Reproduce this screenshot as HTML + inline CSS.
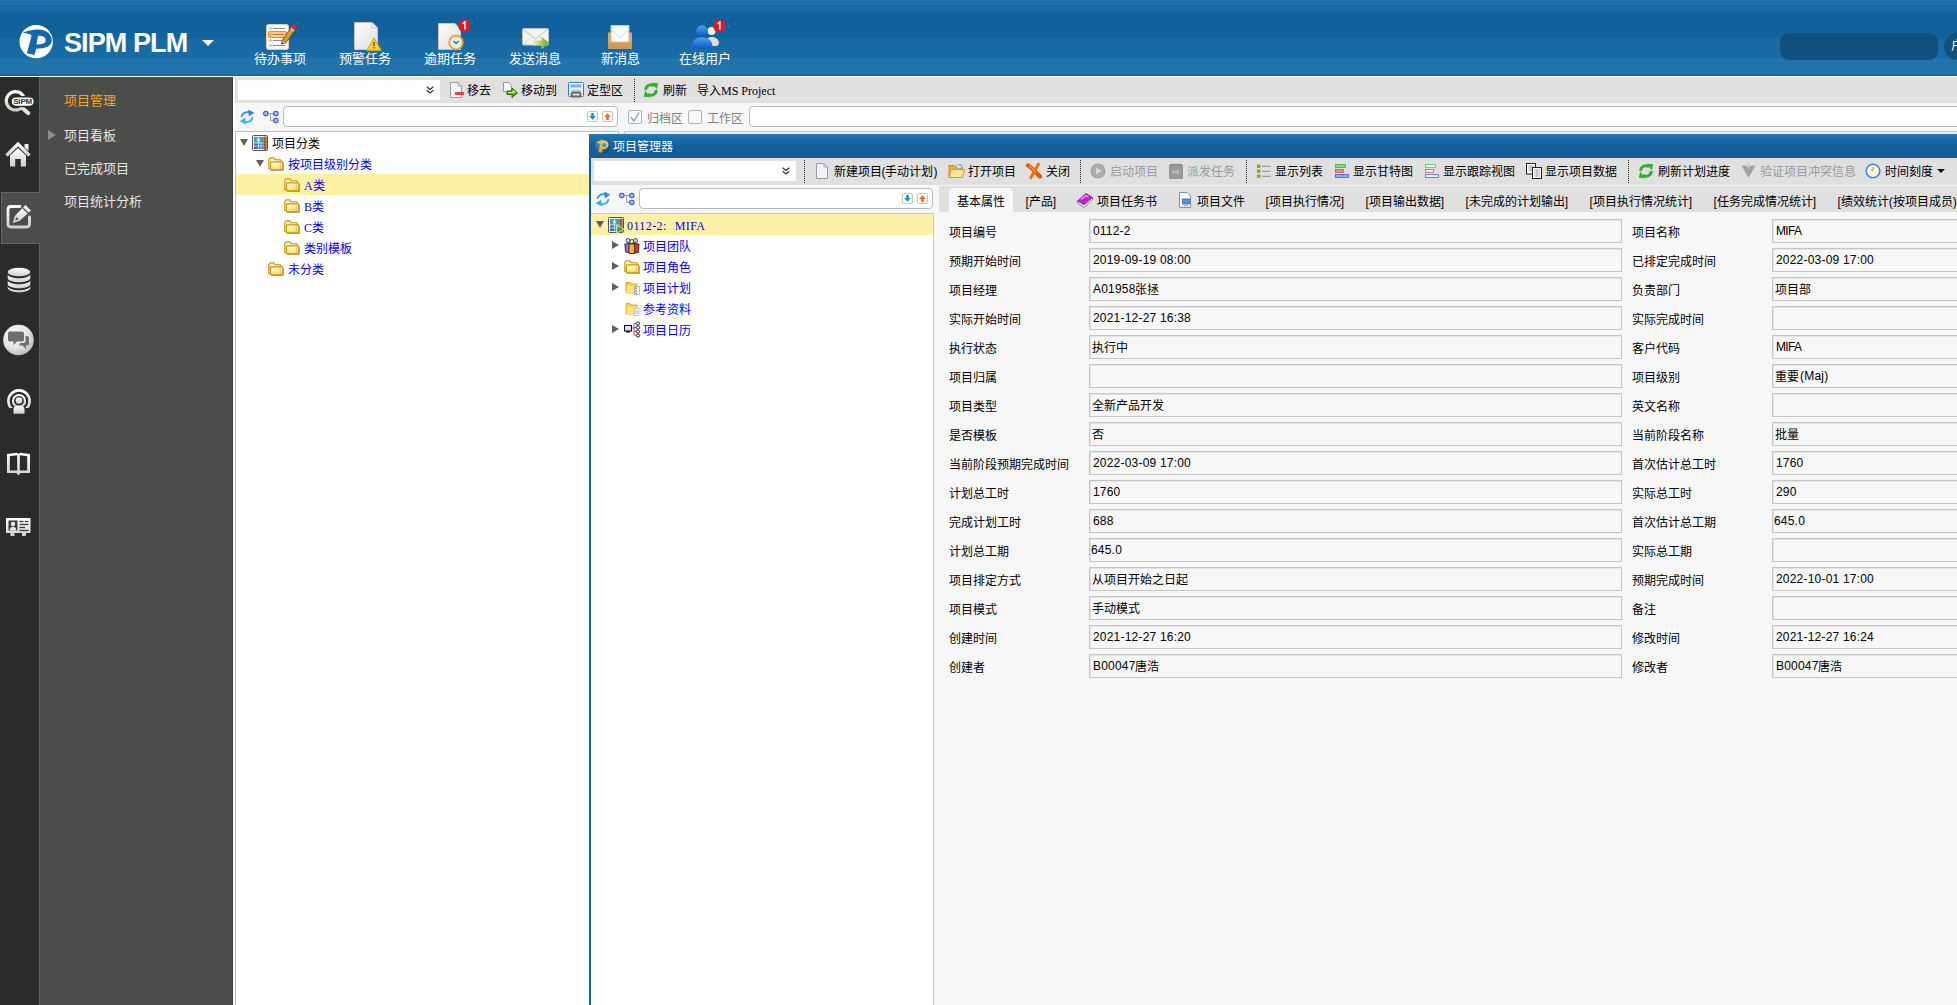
<!DOCTYPE html>
<html lang="zh-CN"><head><meta charset="utf-8">
<style>
*{box-sizing:border-box;margin:0;padding:0}
html,body{width:1957px;height:1005px;overflow:hidden;background:#fff;font-family:"Liberation Sans",sans-serif;font-size:12px;color:#000}
.abs{position:absolute}
#hdr{left:0;top:0;width:1957px;height:76px;background:linear-gradient(to bottom,#2371ab 0px,#2371ab 4px,#1c6ba7 5.5px,#196aa5 11px,#11609b 14px,#11619b 30px,#10639b 37.5px,#1a69a5 39.5px,#186ca4 57.5px,#2272ab 59.5px,#2274ac 74px,#10609a 75px,#10609a 76px)}
.tbtn{position:absolute;top:52px;width:80px;text-align:center;color:#fff;font-size:13px;line-height:13px;white-space:nowrap}
#dark{left:0;top:77px;width:39px;height:928px;background:#2a2c29}
#gray{left:39px;top:77px;width:194px;height:928px;background:#4b4d4a;border-left:1px solid #5f615e;border-right:1px solid #3a3c39}
.mi{position:absolute;left:64px;color:#e6e6e6;font-size:13px;line-height:14px;white-space:nowrap;letter-spacing:0px}
.tb{background:#e0e0e0}
.lt{background:#f7f7f7}
.t12{position:absolute;font-size:12px;line-height:12px;white-space:nowrap;margin-top:1px}
.ser{font-family:"Liberation Serif",serif}
.blue{color:#0000ff}
.gry{color:#9a9a9a}
.sbox{position:absolute;height:21px;border:1px solid #bababa;border-radius:4px;background:#fff}
.fld{position:absolute;height:24px;border:1px solid #c6c6c6;box-shadow:inset 1px 1px 0 #e4e4e4;background:#f7f7f7;font-size:12px;line-height:21px;padding-left:3px;padding-top:1px;letter-spacing:0.2px;white-space:nowrap;overflow:hidden}
.c{position:relative;top:1px;left:-1px;letter-spacing:0}
.lbl{position:absolute;font-size:12px;line-height:12px;white-space:nowrap;margin-top:1px}
.sep{position:absolute;width:0;border-left:1px dotted #222}
.arrD{position:absolute;width:0;height:0;border-left:4px solid transparent;border-right:4px solid transparent;border-top:7px solid #606060}
.arrR{position:absolute;width:0;height:0;border-top:4px solid transparent;border-bottom:4px solid transparent;border-left:7px solid #606060}
svg{position:absolute;overflow:visible}
</style></head><body>
<!-- HEADER -->
<div id="hdr" class="abs">
<!-- logo -->
<svg style="left:19px;top:24px" width="35" height="35" viewBox="0 0 35 35"><circle cx="17.2" cy="17.6" r="16.7" fill="#fff"/><path d="M 3.90 9.00 C 7.00 6.80 13.00 5.60 20.20 5.40 C 27.50 5.60 32.80 10.00 32.80 16.50 C 32.80 22.00 26.50 24.70 17.20 24.70 L 15.50 30.90 L 7.90 29.20 L 12.40 12.40 L 12.40 10.90 C 9.50 9.60 6.50 9.00 3.90 9.00 Z M 19.10 11.80 C 22.50 11.60 26.70 12.60 26.70 16.30 C 26.70 19.60 23.00 20.50 17.40 20.50 Z" fill="#1268b0" fill-rule="evenodd"/></svg>
<div class="abs" style="left:64px;top:27px;font-size:27px;line-height:32px;font-weight:bold;color:#fff;letter-spacing:-0.9px;white-space:nowrap">SIPM PLM</div>
<div class="abs" style="left:202px;top:40px;width:0;height:0;border-left:6px solid transparent;border-right:6px solid transparent;border-top:6px solid #fff"></div>
<svg style="left:0;top:0" width="800" height="76" viewBox="0 0 800 76">
<defs>
<linearGradient id="pg" x1="0" y1="0" x2="1" y2="1"><stop offset="0" stop-color="#fff"/><stop offset="1" stop-color="#dcdcdc"/></linearGradient>
<linearGradient id="bl" x1="0" y1="0" x2="0" y2="1"><stop offset="0" stop-color="#4aa3f0"/><stop offset="1" stop-color="#0a56c8"/></linearGradient>
<linearGradient id="gr" x1="0" y1="0" x2="1" y2="0"><stop offset="0" stop-color="#e8f0c8"/><stop offset="1" stop-color="#6aa810"/></linearGradient>
</defs>
<!-- todo -->
<rect x="266.5" y="24.5" width="22" height="25" rx="2" fill="#fbfaf6" stroke="#d8ccb4"/>
<g stroke="#8a8a8a" stroke-width="1"><line x1="273" y1="28.5" x2="285" y2="28.5"/><line x1="273" y1="40.5" x2="285" y2="40.5"/><line x1="273" y1="45.5" x2="285" y2="45.5"/></g>
<g fill="#ddd" stroke="#999" stroke-width="0.6"><circle cx="270.5" cy="28.5" r="1.1"/><circle cx="270.5" cy="40.5" r="1.1"/><circle cx="270.5" cy="45.5" r="1.1"/></g>
<rect x="268.5" y="31.5" width="18" height="6" rx="1.5" fill="#fbc98a" stroke="#f08a1c" stroke-width="1.2"/>
<line x1="273" y1="34.5" x2="284" y2="34.5" stroke="#c0762a"/><circle cx="270.7" cy="34.5" r="1" fill="#f7e2c0" stroke="#c0762a" stroke-width="0.6"/>
<path d="M293 25 L296.400 27.800 L286.200 42.400 L281.600 44 L282.800 39.400 Z" fill="#d8a032" stroke="#6a4a10" stroke-width="0.800"/>
<path d="M291.200 27.600 L294.600 30.400 L296.400 27.800 C296.800 26 294.500 24.200 293 25 Z" fill="#ee1c24"/>
<path d="M290.300 28.900 L293.700 31.700 L294.600 30.400 L291.200 27.600 Z" fill="#c8c8c8"/>
<path d="M282.800 39.400 L286.200 42.400 L281.600 44 Z" fill="#e8cc8a" stroke="#6a4a10" stroke-width="0.600"/>
<path d="M282.100 42.400 L283.200 43.400 L281.600 44 Z" fill="#3a2a1a"/>
<!-- warn -->
<path d="M354.5 22.5 L372 22.5 L377.5 28 L377.5 49.5 L354.5 49.5 Z" fill="url(#pg)" stroke="#c4c4c4"/>
<path d="M372 22.5 L372 28 L377.5 28 Z" fill="#f2f2f2" stroke="#c4c4c4" stroke-width="0.8"/>
<path d="M374 38.2 L381 50.3 L367 50.3 Z" fill="#f8d23a" stroke="#e0a818" stroke-width="1.2" stroke-linejoin="round"/>
<rect x="373.3" y="42" width="1.5" height="4" fill="#7a5a10"/><rect x="373.3" y="47" width="1.5" height="1.5" fill="#7a5a10"/>
<!-- overdue -->
<path d="M438.5 23.5 L455 23.5 L460.5 29 L460.5 49.5 L438.5 49.5 Z" fill="url(#pg)" stroke="#c4c4c4"/>
<circle cx="456" cy="42.5" r="6.8" fill="#e8ecf6" stroke="#f0a21e" stroke-width="1.8"/>
<path d="M453.5 41 L456 43.5 L458.8 41" fill="none" stroke="#555" stroke-width="1.1"/>
<circle cx="464.3" cy="25.8" r="6.2" fill="#e01a2a"/>
<path d="M462.6 23.6 L464.9 22 L464.9 29.5" fill="none" stroke="#fff" stroke-width="1.5"/>
<!-- send -->
<rect x="522.5" y="28.5" width="26" height="16.5" rx="1" fill="#f4f4f4" stroke="#bdbdbd"/>
<path d="M523 29 L535.5 39 L548 29" fill="none" stroke="#bdbdbd" stroke-width="1"/>
<path d="M523 45 L532 36.5 M548 45 L539 36.5" fill="none" stroke="#d2d2d2" stroke-width="0.8"/>
<path d="M533 40.5 L541.5 40.5 L541.5 36.8 L549.2 43 L541.5 49.2 L541.5 45.5 L533 45.5 Z" fill="url(#gr)"/>
<!-- inbox -->
<path d="M611 25.5 L629 25.5 L629 43 L611 43 Z" fill="#f6f6f8" stroke="#d0d0d4" stroke-width="0.8"/>
<path d="M611 30.5 L620 38.5 L629 30.5" fill="none" stroke="#cfcfd4" stroke-width="0.9"/>
<path d="M608 32.5 L611 32.5 L611 41.5 L629 41.5 L629 32.5 L632 32.5 L632 48.8 L608 48.8 Z" fill="#dfa865"/>
<path d="M608 43 L632 43 L632 48.8 L608 48.8 Z" fill="#d39a55"/>
<path d="M613 30 L627 30 L627 41.5 L613 41.5 Z" fill="#fdfdff" opacity="0.9"/>
<path d="M613 31 L620 37.5 L627 31" fill="none" stroke="#d4d4da" stroke-width="0.9"/>
<!-- users -->
<circle cx="711.5" cy="31" r="4" fill="#f2f2f2"/><path d="M705.5 46 C705.5 39 708 37 711.5 37 C716 37 719 39.5 719 44 L717 46 Z" fill="#dcdcdc"/>
<circle cx="702" cy="31" r="5.8" fill="url(#bl)"/>
<path d="M692.2 47 C692.2 40 696 37.2 702 37.2 C708.5 37.2 712.5 40.5 712.5 47 C709 49.6 695.5 49.6 692.2 47 Z" fill="url(#bl)"/>
<circle cx="719.2" cy="26" r="6.2" fill="#e01a2a"/>
<path d="M717.5 23.8 L719.8 22.2 L719.8 29.7" fill="none" stroke="#fff" stroke-width="1.5"/>
</svg>
<div class="tbtn" style="left:240px">待办事项</div>
<div class="tbtn" style="left:325px">预警任务</div>
<div class="tbtn" style="left:410px">逾期任务</div>
<div class="tbtn" style="left:495px">发送消息</div>
<div class="tbtn" style="left:580px">新消息</div>
<div class="tbtn" style="left:665px">在线用户</div>
<div class="abs" style="left:1780px;top:33px;width:158px;height:27px;border-radius:9px;background:#114f7c"></div>
<div class="abs" style="left:1944px;top:33px;width:27px;height:27px;border-radius:13.5px;background:#114f7c"></div>
<div class="abs" style="left:1951px;top:40px;color:#fff;font-size:12px;line-height:12px">户</div>
</div>
<!-- SIDEBAR -->
<div id="dark" class="abs"></div>
<div id="gray" class="abs"></div>
<div class="abs" style="left:1px;top:192px;width:39px;height:52px;background:#4b4d4a;border:1px solid #636562;border-right:none"></div>
<svg style="left:0;top:77px" width="40" height="480" viewBox="0 77 40 480">
<defs><linearGradient id="ic" x1="0" y1="0" x2="0" y2="1"><stop offset="0" stop-color="#ffffff"/><stop offset="1" stop-color="#cfcfcf"/></linearGradient>
<radialGradient id="cb" cx="0.4" cy="0.35" r="0.7"><stop offset="0" stop-color="#ffffff"/><stop offset="0.6" stop-color="#e4e4e4"/><stop offset="1" stop-color="#b4b4b4"/></radialGradient></defs>
<!-- search SIPM -->
<circle cx="15.500" cy="100.800" r="9.200" fill="none" stroke="url(#ic)" stroke-width="3.200"/>
<line x1="23" y1="108.500" x2="28.300" y2="113.200" stroke="#e2e2e2" stroke-width="4" stroke-linecap="round"/>
<rect x="11" y="96.800" width="23.400" height="9.600" rx="4.800" fill="#fff" stroke="#2a2c29" stroke-width="1.500"/>
<text x="22.700" y="103.800" font-family="Liberation Sans,sans-serif" font-weight="bold" font-size="8" text-anchor="middle" fill="#333" textLength="19">SIPM</text>
<!-- home -->
<path d="M6.5 155.5 L18 144 L29.5 155.5" fill="none" stroke="url(#ic)" stroke-width="3.2" stroke-linejoin="miter"/>
<path d="M24.5 144 L28.5 144 L28.5 151 L24.5 147.5 Z" fill="#ededed"/>
<path d="M10 155.5 L18 148 L26 155.5 L26 166.5 L20.8 166.5 L20.8 159 L15.2 159 L15.2 166.5 L10 166.5 Z" fill="url(#ic)"/>
<!-- edit -->
<path d="M20 206.5 L11 206.5 C9 206.5 8 207.5 8 209.5 L8 224 C8 226 9 227 11 227 L26.5 227 C28.5 227 29.5 226 29.5 224 L29.5 217" fill="none" stroke="url(#ic)" stroke-width="2.8" stroke-linecap="round"/>
<path d="M25.5 205 L31 210.5 L19.5 221 L12.8 223 L14.8 216 Z" fill="url(#ic)"/>
<path d="M16.5 217 L18.8 219.3 L15 220.6 Z" fill="#4b4d4a"/>
<line x1="23" y1="208" x2="28.5" y2="213.5" stroke="#4b4d4a" stroke-width="1.3"/>
<!-- db -->
<g fill="url(#ic)"><ellipse cx="19" cy="272" rx="11.3" ry="4.3"/>
<path d="M7.7 274.5 C10 279.5 28 279.5 30.3 274.5 L30.3 278.5 C28 283.5 10 283.5 7.7 278.5 Z"/>
<path d="M7.7 280.5 C10 285.5 28 285.5 30.3 280.5 L30.3 284.5 C28 289.5 10 289.5 7.7 284.5 Z"/>
<path d="M7.7 286.5 C10 291.5 28 291.5 30.3 286.5 L30.3 288.3 C28 293.8 10 293.8 7.7 288.3 Z"/></g>
<!-- chat -->
<circle cx="18.5" cy="340" r="15.3" fill="url(#cb)"/>
<path d="M10 331.5 L22 331.5 C23.2 331.5 24 332.3 24 333.5 L24 339.5 C24 340.7 23.2 341.5 22 341.5 L17 341.5 L13.5 345 L13.5 341.5 L10 341.5 C8.8 341.5 8 340.7 8 339.5 L8 333.5 C8 332.3 8.800 331.5 10 331.5 Z" fill="#6e6e6e"/>
<path d="M25.5 336 L27 336 C28.200 336 29 336.800 29 338 L29 343.500 C29 344.700 28.200 345.500 27 345.500 L26 345.500 L26 349 L22.500 345.500 L19 345.500 L20 343 L23.500 343 C24.700 343 25.500 342.200 25.500 341 Z" fill="#6e6e6e"/>
<!-- broadcast -->
<circle cx="19" cy="401" r="10.600" fill="none" stroke="url(#ic)" stroke-width="2.600"/>
<circle cx="19" cy="401" r="6" fill="none" stroke="url(#ic)" stroke-width="2.200"/>
<rect x="6" y="408" width="26" height="8" fill="#2a2c29"/>
<circle cx="19" cy="400.500" r="3.300" fill="url(#ic)"/>
<path d="M13.500 413.800 L13.500 409.500 C13.500 406.500 16 405.500 19 405.500 C22 405.500 24.500 406.500 24.500 409.500 L24.500 413.800 Z" fill="url(#ic)"/>
<!-- book -->
<path d="M7 454 L17 452.800 L18.500 454 L20 452.800 L30 454 L30 473 L20.500 473 L18.500 475.500 L16.500 473 L7 473 Z M9.800 456.200 L9.800 470.400 L17.200 470.400 L17.200 455.300 Z M27.200 456.200 L27.200 470.400 L19.800 470.400 L19.800 455.300 Z" fill="url(#ic)" fill-rule="evenodd"/>
<!-- card -->
<path d="M6 518 L30.500 518 L30.500 533 L26 533 L26 536 L22 536 L22 533 L14.500 533 L14.500 536 L10.500 536 L10.500 533 L6 533 Z" fill="url(#ic)"/>
<rect x="8.500" y="520.500" width="9" height="10" fill="#3a3c39"/>
<circle cx="13" cy="524" r="2.200" fill="#e8e8e8"/><path d="M9.800 530.500 C9.800 527.500 11.500 526.800 13 526.800 C14.500 526.800 16.200 527.500 16.200 530.500 Z" fill="#e8e8e8"/>
<g stroke="#3a3c39" stroke-width="1.300"><line x1="19.500" y1="521.500" x2="23.500" y2="521.500"/><line x1="24.800" y1="521.500" x2="28.500" y2="521.500"/><line x1="19.500" y1="524.500" x2="28.500" y2="524.500"/><line x1="19.500" y1="527.500" x2="25" y2="527.500"/><line x1="19.500" y1="530.500" x2="28.500" y2="530.500"/></g>
</svg>
<div class="mi" style="top:94px;color:#f9a61a">项目管理</div>
<div class="abs" style="left:48px;top:130px;width:0;height:0;border-top:5px solid transparent;border-bottom:5px solid transparent;border-left:8px solid #8d8f8c"></div>
<div class="mi" style="top:129px">项目看板</div>
<div class="mi" style="top:162px">已完成项目</div>
<div class="mi" style="top:195px">项目统计分析</div>
<!-- MAIN -->
<svg width="0" height="0" style="left:0;top:0"><defs>
<linearGradient id="fg" x1="0" y1="0" x2="0" y2="1"><stop offset="0" stop-color="#fffde4"/><stop offset="0.5" stop-color="#fff0a0"/><stop offset="1" stop-color="#fbd65a"/></linearGradient>
<linearGradient id="rb" x1="0" y1="0" x2="1" y2="1"><stop offset="0" stop-color="#1e78e6"/><stop offset="1" stop-color="#46c8f0"/></linearGradient>
<symbol id="i-rfb" viewBox="0 0 16 16"><path d="M2.600 7.400 C3.400 4 7 2.400 10.400 3.400" fill="none" stroke="url(#rb)" stroke-width="1.900" stroke-linecap="round"/><path d="M9.200 0.400 L15.200 3.800 L9.800 7.400 Z" fill="#2a86ec"/><path d="M13.400 8.800 C12.600 12.200 9 13.800 5.600 12.800" fill="none" stroke="url(#rb)" stroke-width="1.900" stroke-linecap="round"/><path d="M6.800 15.600 L0.800 12.200 L6.200 8.600 Z" fill="#38b0ee"/></symbol>
<symbol id="i-rfg" viewBox="0 0 16 16"><path d="M2.600 7.800 A5.400 5.400 0 0 1 11.200 3.800" stroke="#2db22a" stroke-width="3" fill="none"/><path d="M8.800 0.800 L15.200 1.200 L13.800 7.600 Z" fill="#2db22a"/><path d="M13.400 8.200 A5.400 5.400 0 0 1 4.800 12.200" stroke="#2db22a" stroke-width="3" fill="none"/><path d="M7.200 15.200 L0.800 14.800 L2.200 8.400 Z" fill="#2db22a"/></symbol>
<symbol id="i-tree" viewBox="0 0 16 14"><path d="M3 3.500 L12.500 3.500 M7.500 3.500 L7.500 10.500 L12.500 10.500" fill="none" stroke="#a2a2a2" stroke-width="1"/><g fill="#b0bef8" stroke="#3454e0" stroke-width="1.100"><circle cx="2.800" cy="3.500" r="2.200"/><circle cx="12.800" cy="3.500" r="2.200"/><circle cx="12.800" cy="10.500" r="2.200"/></g></symbol>
<symbol id="i-fold" viewBox="0 0 16 14"><path d="M15.300 6 L15.300 13.400 L3 13.400" fill="none" stroke="#6a5010" stroke-width="0.900" opacity="0.650"/><path d="M0.800 11.800 L0.800 2.600 L2.200 0.900 L5.800 0.900 L7.300 2.800 L12.600 2.800 L13.200 3.600 L13.200 11.800 Z" fill="#fff6c8" stroke="#c8940c" stroke-width="1.100" stroke-linejoin="round"/><rect x="2.400" y="4.900" width="12.300" height="7.900" rx="0.800" fill="url(#fg)" stroke="#c8940c" stroke-width="1.100"/><path d="M12.300 5.600 L12.300 12.200" stroke="#f2aa50" stroke-width="0.800"/></symbol>
<symbol id="i-dn" viewBox="0 0 11 11"><rect x="0.500" y="0.500" width="10" height="10" rx="1.500" fill="#fff" stroke="#c4c4c4"/><path d="M4.200 2 L6.800 2 L6.800 5 L8.800 5 L5.500 8.800 L2.200 5 L4.200 5 Z" fill="#1890d8"/></symbol>
<symbol id="i-up" viewBox="0 0 11 11"><rect x="0.500" y="0.500" width="10" height="10" rx="1.500" fill="#fff" stroke="#c4c4c4"/><path d="M4.200 9 L6.800 9 L6.800 6 L8.800 6 L5.500 2.200 L2.200 6 L4.200 6 Z" fill="#ff6a00"/></symbol>
<symbol id="i-chev" viewBox="0 0 8 8"><path d="M0.700 0.700 L4 3.500 L7.300 0.700 M0.700 4.200 L4 7 L7.300 4.200" fill="none" stroke="#333" stroke-width="1.200"/></symbol>
<symbol id="i-grid" viewBox="0 0 16 16"><rect x="0.500" y="0.500" width="15" height="15" rx="1" fill="#f4f4f4" stroke="#555"/><rect x="2" y="2" width="9.500" height="12" fill="#3e68b8"/><rect x="2" y="2" width="9.500" height="6" fill="#3fa0ae"/><path d="M2 8 L11.500 8 M6.500 2 L6.500 14 M2 11 L11.500 11 M9 8 L9 14" stroke="#e8f4ff" stroke-width="0.800"/><circle cx="6.500" cy="5" r="1.400" fill="none" stroke="#e8f8ff" stroke-width="0.800"/><rect x="11.800" y="1.500" width="3" height="13.500" fill="#b8703a"/><path d="M11.800 4 L13.500 4 M11.800 7 L13.500 7 M11.800 10 L13.500 10 M11.800 13 L13.500 13" stroke="#5a2c10" stroke-width="0.800"/></symbol>
<symbol id="i-doc" viewBox="0 0 14 16"><path d="M1.500 0.500 L9 0.500 L12.500 4 L12.500 15.500 L1.500 15.500 Z" fill="#f2f2fa" stroke="#9c9ca4"/><path d="M9 0.500 L9 4 L12.500 4" fill="none" stroke="#9a9a9a" stroke-width="0.800"/></symbol>
</defs></svg>
<div id="main">
<div class="abs tb" style="left:235px;top:77px;width:1722px;height:26px"></div>
<div class="abs lt" style="left:235px;top:103px;width:1722px;height:29px"></div>
<div class="abs" style="left:238px;top:80px;width:202px;height:20px;background:#fffcfd"></div>
<svg style="left:426px;top:86px" width="8" height="8"><use href="#i-chev"/></svg>
<!-- toolbar buttons -->
<svg style="left:449px;top:82px" width="14" height="16"><use href="#i-doc"/></svg>
<div class="abs" style="left:455px;top:92px;width:9px;height:3px;background:#e0444c"></div>
<div class="t12" style="left:467px;top:84px">移去</div>
<svg style="left:502px;top:82px" width="16" height="16" viewBox="0 0 16 16"><path d="M1.500 0.500 L6.500 0.500 L9.500 3.500 L9.500 9.500 L1.500 9.500 Z" fill="#fdfdff" stroke="#8a8a9a" stroke-width="0.900"/><path d="M5 9 L10 9 L10 6 L15.500 10.800 L10 15.500 L10 12.500 L5 12.500 Z" fill="#2ca814" stroke="#0c6a08" stroke-width="0.900"/><path d="M6 10.600 L11.200 10.600 L11.200 8.800 L13.600 10.800" fill="none" stroke="#f4f43a" stroke-width="1.300"/></svg>
<div class="t12" style="left:521px;top:84px">移动到</div>
<svg style="left:568px;top:82px" width="16" height="16" viewBox="0 0 16 16"><rect x="0.500" y="0.500" width="15" height="14" rx="1" fill="#f4f8ff" stroke="#2a7cd0"/><rect x="2.500" y="2.500" width="11" height="3" fill="#6ab0ec"/><rect x="2.500" y="7.500" width="11" height="2" fill="#a8d0f4"/><rect x="3" y="10" width="10" height="5" rx="1.500" fill="#8a8a8a" stroke="#444" stroke-width="0.800"/><rect x="5" y="12" width="6" height="1.200" fill="#eee"/></svg>
<div class="t12" style="left:587px;top:84px">定型区</div>
<div class="sep" style="left:634px;top:79px;height:23px"></div>
<svg style="left:643px;top:82px" width="16" height="16"><use href="#i-rfg"/></svg>
<div class="t12" style="left:663px;top:84px">刷新</div>
<div class="t12" style="left:697px;top:84px">导入<span class="ser" style="font-size:12px">MS Project</span></div>
<!-- second row -->
<svg style="left:239px;top:109px" width="16" height="16"><use href="#i-rfb"/></svg>
<svg style="left:263px;top:110px" width="16" height="14"><use href="#i-tree"/></svg>
<div class="sbox" style="left:283px;top:106px;width:335px"></div>
<svg style="left:587px;top:111px" width="11" height="11"><use href="#i-dn"/></svg>
<svg style="left:602px;top:111px" width="11" height="11"><use href="#i-up"/></svg>
<div class="abs" style="left:628px;top:110px;width:14px;height:14px;border:1px solid #aab4c6;border-radius:2px;background:#f9f9f9"></div>
<svg style="left:630px;top:112px" width="10" height="10" viewBox="0 0 10 10"><path d="M1 5 L3.800 9 L9.200 0.500" fill="none" stroke="#8e98aa" stroke-width="1.300"/></svg>
<div class="t12" style="left:647px;top:112px;color:#808080">归档区</div>
<div class="abs" style="left:688px;top:110px;width:14px;height:14px;border:1px solid #aab4c6;border-radius:2px;background:#f9f9f9"></div>
<div class="t12" style="left:707px;top:112px;color:#808080">工作区</div>
<div class="sbox" style="left:749px;top:106px;width:1230px"></div>
<!-- left tree -->
<div class="abs" style="left:235px;top:131px;width:384px;height:880px;background:#fff;border:1px solid #bdbdbd"></div>
<div class="abs" style="left:236px;top:174px;width:382px;height:21px;background:#fef0a5"></div>
<div class="arrD" style="left:240px;top:139px"></div>
<svg style="left:252px;top:135px" width="16" height="16"><use href="#i-grid"/></svg>
<div class="t12" style="left:272px;top:137px">项目分类</div>
<div class="arrD" style="left:256px;top:160px"></div>
<svg style="left:268px;top:157px" width="16" height="14"><use href="#i-fold"/></svg>
<div class="t12 blue" style="left:288px;top:158px">按项目级别分类</div>
<svg style="left:284px;top:178px" width="16" height="14"><use href="#i-fold"/></svg>
<div class="t12 blue" style="left:304px;top:179px"><span class="ser">A</span>类</div>
<svg style="left:284px;top:199px" width="16" height="14"><use href="#i-fold"/></svg>
<div class="t12 blue" style="left:304px;top:200px"><span class="ser">B</span>类</div>
<svg style="left:284px;top:220px" width="16" height="14"><use href="#i-fold"/></svg>
<div class="t12 blue" style="left:304px;top:221px"><span class="ser">C</span>类</div>
<svg style="left:284px;top:241px" width="16" height="14"><use href="#i-fold"/></svg>
<div class="t12 blue" style="left:304px;top:242px">类别模板</div>
<svg style="left:268px;top:262px" width="16" height="14"><use href="#i-fold"/></svg>
<div class="t12 blue" style="left:288px;top:263px">未分类</div>
<!-- right grid stub -->
<div class="abs" style="left:624px;top:131px;width:1340px;height:4px;background:#f1eeee;border-top:1px solid #c6c6c6;border-left:1px solid #c6c6c6"></div>
</div>
<!-- POPUP -->
<div id="popup">
<div class="abs" style="left:589px;top:134px;width:1368px;height:871px;background:#f7f7f7;border-left:2px solid #11609b"></div>
<div class="abs" style="left:589px;top:134px;width:1368px;height:24px;background:linear-gradient(to bottom,#2a78b2 0,#1d6ba6 5px,#11609b 12px,#11609b 24px)"></div>
<svg style="left:594px;top:138px" width="16" height="16" viewBox="0 0 16 16"><defs><linearGradient id="po" x1="0" y1="1" x2="1" y2="0"><stop offset="0" stop-color="#f08a1a"/><stop offset="1" stop-color="#ffe04a"/></linearGradient><radialGradient id="pl" cx="0.4" cy="0.35" r="0.75"><stop offset="0" stop-color="#3aa0e0"/><stop offset="1" stop-color="#0a3a78"/></radialGradient></defs><circle cx="8" cy="8" r="7.800" fill="url(#pl)"/><path d="M2.200 5 C5 2.200 9 1.800 11.500 2.800 C14.500 4 15.200 7 13.800 9 C12.600 10.800 10.500 11.300 8.600 11.200 L7.700 14.800 L4.200 14.200 L6.300 6 C5 5 3.500 4.800 2.200 5 Z" fill="url(#po)"/><ellipse cx="10.300" cy="6.900" rx="2.300" ry="2" fill="#2aa4e0"/></svg>
<div class="t12" style="left:613px;top:140px;color:#fff">项目管理器</div>
<!-- popup toolbar -->
<div class="abs tb" style="left:591px;top:158px;width:1366px;height:27px"></div>
<div class="abs" style="left:594px;top:161px;width:202px;height:20px;background:#fffcfd"></div>
<svg style="left:782px;top:167px" width="8" height="8"><use href="#i-chev"/></svg>
<div class="sep" style="left:804px;top:160px;height:23px"></div>
<svg style="left:815px;top:163px" width="14" height="16"><use href="#i-doc"/></svg>
<div class="t12" style="left:833.5px;top:165px">新建项目(手动计划)</div>
<svg style="left:948px;top:163px" width="17" height="16" viewBox="0 0 17 16"><path d="M1 2.500 L6.500 2.500 L8 4 L14.500 4 L14.500 14.500 L1 14.500 Z" fill="#e4b04e" stroke="#c08a2a" stroke-width="0.900"/><path d="M9 1.500 L13.500 1.500 L13.500 5 L9 5 Z" fill="#f2f8ff" stroke="#7ab0e0" stroke-width="0.700"/><path d="M11 2.500 L13 2.500" stroke="#3aa0e8" stroke-width="1"/><path d="M3.200 6.500 L16.500 6.500 L14.500 14.500 L1 14.500 Z" fill="#fbe29a" stroke="#c8962e" stroke-width="0.900"/></svg>
<div class="t12" style="left:968px;top:165px">打开项目</div>
<svg style="left:1026px;top:163px" width="16" height="16" viewBox="0 0 16 16"><path d="M2 2.500 C6 5 10 9 14 13.500" fill="none" stroke="#ee5208" stroke-width="4.200" stroke-linecap="round"/><path d="M12.500 1.200 C10 5 7.500 10 4.800 14.800" fill="none" stroke="#f4680c" stroke-width="3" stroke-linecap="round"/><path d="M3 3 C6 5 8 7 10 9.500" fill="none" stroke="#fa9a4a" stroke-width="1.200" stroke-linecap="round"/></svg>
<div class="t12" style="left:1045.5px;top:165px">关闭</div>
<div class="sep" style="left:1080px;top:160px;height:23px"></div>
<svg style="left:1090px;top:163px" width="16" height="16" viewBox="0 0 16 16"><circle cx="8" cy="8" r="7.500" fill="#a4a4a4"/><circle cx="8" cy="8" r="6" fill="#aeaeae"/><path d="M6 4.500 L11.800 8 L6 11.500 Z" fill="#d8d8d8"/></svg>
<div class="t12 gry" style="left:1110px;top:165px">启动项目</div>
<svg style="left:1168px;top:163px" width="16" height="16" viewBox="0 0 16 16"><path d="M1.500 2 L14.500 2 L14.500 15.500 L1.500 15.500 Z" fill="#9a9a9a" stroke="#8a8a8a" stroke-width="0.800"/><path d="M2 2 L3 0.800 L4 2 L5 0.800 L6 2 L7 0.800 L8 2 L9 0.800 L10 2 L11 0.800 L12 2 L13 0.800 L14 2" fill="none" stroke="#8a8a8a" stroke-width="0.900"/><path d="M3.500 7 L8.500 7 L8.500 4.800 L12.800 9 L8.500 13.200 L8.500 11 L3.500 11 Z" fill="#b8b8b8" stroke="#888" stroke-width="0.600"/></svg>
<div class="t12 gry" style="left:1187px;top:165px">派发任务</div>
<div class="sep" style="left:1246px;top:160px;height:23px"></div>
<svg style="left:1257px;top:164px" width="14" height="14" viewBox="0 0 14 14"><g fill="#8ab82a" stroke="#5a8a10" stroke-width="0.600"><rect x="0.500" y="1" width="2.500" height="2.500"/><rect x="0.500" y="6" width="2.500" height="2.500"/><rect x="0.500" y="11" width="2.500" height="2.500"/></g><g stroke="#8a8a8a" stroke-width="1"><line x1="5" y1="2.300" x2="13.500" y2="2.300"/><line x1="5" y1="7.300" x2="13.500" y2="7.300"/><line x1="5" y1="12.300" x2="13.500" y2="12.300"/></g></svg>
<div class="t12" style="left:1275px;top:165px">显示列表</div>
<svg style="left:1335px;top:164px" width="14" height="14" viewBox="0 0 14 14"><rect x="0.500" y="0.500" width="10" height="3" fill="#7ee07e" stroke="#3cb03c" stroke-width="0.800"/><rect x="0.500" y="5.500" width="8" height="3" fill="#f08a7e" stroke="#d8503c" stroke-width="0.800"/><rect x="0.500" y="10.500" width="13" height="3" fill="#8aa8f4" stroke="#3c5ce0" stroke-width="0.800"/></svg>
<div class="t12" style="left:1353px;top:165px">显示甘特图</div>
<svg style="left:1425px;top:164px" width="14" height="14" viewBox="0 0 14 14"><rect x="0.500" y="0.500" width="10" height="3" fill="#f4fff4" stroke="#5cc05c" stroke-width="0.800"/><rect x="0.500" y="5.500" width="8" height="3" fill="#fff0f0" stroke="#e0604c" stroke-width="0.800"/><rect x="0.500" y="10.500" width="13" height="3" fill="#f0f4ff" stroke="#4c6ce0" stroke-width="0.800"/></svg>
<div class="t12" style="left:1443px;top:165px">显示跟踪视图</div>
<svg style="left:1526px;top:163px" width="16" height="16" viewBox="0 0 16 16"><rect x="0.500" y="0.500" width="9" height="10.500" fill="#fff" stroke="#222"/><path d="M2 3 L8 3 M2 5 L8 5 M2 7 L8 7 M5 2 L5 9" stroke="#999" stroke-width="0.700"/><rect x="6.500" y="4.500" width="9" height="11" fill="#fff" stroke="#222"/><path d="M8 7 L14 7 M8 9 L14 9 M8 11 L14 11 M8 13 L14 13 M11 6 L11 14" stroke="#999" stroke-width="0.700"/></svg>
<div class="t12" style="left:1545px;top:165px">显示项目数据</div>
<div class="sep" style="left:1628px;top:160px;height:23px"></div>
<svg style="left:1638px;top:163px" width="16" height="16"><use href="#i-rfg"/></svg>
<div class="t12" style="left:1657.5px;top:165px">刷新计划进度</div>
<svg style="left:1741px;top:163px" width="15" height="16" viewBox="0 0 15 16"><path d="M0.500 2.500 L5 2.500 L7.500 6 L10 2.500 L14.500 2.500 L7.500 15 Z" fill="#a2a2a2"/><path d="M7.500 0.500 L7.500 5 M5.500 3 L7.500 5.500 L9.500 3" stroke="#b8b8b8" stroke-width="1" fill="none"/></svg>
<div class="t12 gry" style="left:1759.5px;top:165px">验证项目冲突信息</div>
<svg style="left:1865px;top:163px" width="16" height="16" viewBox="0 0 16 16"><circle cx="8" cy="8" r="6.800" fill="#fdf6e0" stroke="#3a8ad8" stroke-width="1.600"/><path d="M8 4 L8 8 L5.500 6.500" fill="none" stroke="#c8982a" stroke-width="1"/></svg>
<div class="t12" style="left:1884.5px;top:165px">时间刻度</div>
<div class="abs" style="left:1937px;top:169px;width:0;height:0;border-left:4px solid transparent;border-right:4px solid transparent;border-top:4px solid #111"></div>
<!-- popup left tree -->
<svg style="left:595px;top:191px" width="16" height="16"><use href="#i-rfb"/></svg>
<svg style="left:619px;top:192px" width="16" height="14"><use href="#i-tree"/></svg>
<div class="sbox" style="left:639px;top:188px;width:294px"></div>
<svg style="left:902px;top:193px" width="11" height="11"><use href="#i-dn"/></svg>
<svg style="left:917px;top:193px" width="11" height="11"><use href="#i-up"/></svg>
<div class="abs" style="left:591px;top:213px;width:343px;height:800px;background:#fff;border-top:1px solid #c8c8c8;border-right:1px solid #c8c8c8"></div>
<div class="abs" style="left:591px;top:214px;width:342px;height:21px;background:#fef0a5"></div>
<div class="arrD" style="left:595.5px;top:221px"></div>
<svg style="left:608px;top:217px" width="16" height="16"><use href="#i-grid"/></svg>
<svg style="left:616px;top:225px" width="8.500" height="8.500" viewBox="0 0 10 10"><path d="M1 0.500 L9.500 5 L1 9.500 Z" fill="#2aa82a" stroke="#fff" stroke-width="0.800"/></svg>
<div class="t12 blue ser" style="left:627px;top:219px;font-size:12px;line-height:13px"><span style="letter-spacing:0.4px">0112-2<span style="letter-spacing:5px">:</span> MIFA</span></div>
<div class="arrR" style="left:612px;top:241px"></div>
<svg style="left:624px;top:237px" width="16" height="17" viewBox="0 0 16 17"><circle cx="4" cy="3.500" r="2" fill="#ddd" stroke="#222" stroke-width="0.800"/><circle cx="11.500" cy="3.500" r="2" fill="#ddd" stroke="#222" stroke-width="0.800"/><path d="M0.800 7 L6.500 6 L6.500 16 L1.500 15 Z" fill="#8a6ad8" stroke="#222" stroke-width="0.800"/><path d="M8.500 6 L15 7 L14.500 15.500 L8.500 16.500 Z" fill="#e02a1a" stroke="#222" stroke-width="0.800"/><path d="M5 7 L10.500 7 L10.500 16.500 L5 16.500 Z" fill="#f4b41a" stroke="#222" stroke-width="0.800"/><circle cx="7.800" cy="4.500" r="2" fill="#eee" stroke="#222" stroke-width="0.800"/></svg>
<div class="t12 blue" style="left:643px;top:240px">项目团队</div>
<div class="arrR" style="left:612px;top:262px"></div>
<svg style="left:624px;top:260px" width="16" height="14"><use href="#i-fold"/></svg>
<div class="t12 blue" style="left:643px;top:261px">项目角色</div>
<div class="arrR" style="left:612px;top:283px"></div>
<svg style="left:625px;top:281px" width="16" height="14" viewBox="0 0 16 14"><path d="M1 1.500 L5.500 1.500 L7 3 L12 3 L12 12 L1 12 Z" fill="#f6cc3c" stroke="#d4a020" stroke-width="0.800"/><path d="M2 4.500 L12.500 4.500 L12.500 12 L1.500 12 Z" fill="#fce47a"/><rect x="9.500" y="5.500" width="5" height="8" fill="#fff" stroke="#999" stroke-width="0.700"/><rect x="10.300" y="6.500" width="1.500" height="1.500" fill="#e02a2a"/><rect x="10.300" y="9" width="1.500" height="1.500" fill="#2aa82a"/><rect x="10.300" y="11.500" width="1.500" height="1.200" fill="#2a5ae0"/></svg>
<div class="t12 blue" style="left:643px;top:282px">项目计划</div>
<svg style="left:625px;top:302px" width="16" height="14" viewBox="0 0 16 14"><path d="M1 1.500 L5.500 1.500 L7 3 L12 3 L12 12 L1 12 Z" fill="#f6cc3c" stroke="#d4a020" stroke-width="0.800"/><path d="M2 4.500 L12.500 4.500 L12.500 12 L1.500 12 Z" fill="#fce47a"/><rect x="9.500" y="6.500" width="4.500" height="7" fill="#fff" stroke="#aaa" stroke-width="0.700"/><path d="M10.500 9 L13 9 M10.500 11 L13 11" stroke="#6a8ad0" stroke-width="0.800"/></svg>
<div class="t12 blue" style="left:643px;top:303px">参考资料</div>
<div class="arrR" style="left:612px;top:325px"></div>
<svg style="left:624px;top:321px" width="17" height="17" viewBox="0 0 17 17"><rect x="0.500" y="4.500" width="7" height="5.500" fill="#dde" stroke="#111" stroke-width="1"/><rect x="2" y="10" width="4" height="1.500" fill="#111"/><path d="M8 7 L10 7 M10 2.500 L10 14 M10 2.500 L12.500 2.500 M10 6.500 L12.500 6.500 M10 10.500 L12.500 10.500 M10 14 L12.500 14" stroke="#e02a8a" stroke-width="1" fill="none"/><g fill="#fff" stroke="#111" stroke-width="0.900"><circle cx="14" cy="2.500" r="1.600"/><circle cx="14" cy="6.500" r="1.600"/><circle cx="14" cy="10.500" r="1.600"/><circle cx="14" cy="14.500" r="1.600"/></g></svg>
<div class="t12 blue" style="left:643px;top:324px">项目日历</div>
<!-- tabs -->
<div class="abs" style="left:939px;top:186px;width:1018px;height:26px;background:#e0e0e0"></div>
<div class="abs" style="left:949px;top:188px;width:64px;height:25px;background:#f7f7f7;border-radius:5px 5px 0 0"></div>
<div class="t12" style="left:956.5px;top:195px">基本属性</div>
<div class="t12" style="left:1025.5px;top:195px">[产品]</div>
<svg style="left:1077px;top:193px" width="16" height="15" viewBox="0 0 16 15"><path d="M0.500 8 L9 0.500 L15.500 4.500 L7 12 Z" fill="#c81ad8" stroke="#6a0a8a" stroke-width="0.700"/><path d="M4 6.500 L9 2.500 L11.500 4" fill="none" stroke="#f4a8fc" stroke-width="1.400"/><path d="M0.500 8 L7 12 L15.500 4.500 L15.500 6.500 L7 14.500 L0.500 10 Z" fill="#f4f4f4" stroke="#555" stroke-width="0.700"/></svg>
<div class="t12" style="left:1097px;top:195px">项目任务书</div>
<svg style="left:1178px;top:192px" width="14" height="16" viewBox="0 0 14 16"><path d="M1.500 0.500 L9 0.500 L12.500 4 L12.500 15.500 L1.500 15.500 Z" fill="#fdfdff" stroke="#8a8a9a"/><rect x="4.500" y="7" width="7" height="5" fill="#4a9ae8" stroke="#1a5ab0" stroke-width="0.700"/><rect x="5.500" y="13" width="5" height="1.200" fill="#aaa"/></svg>
<div class="t12" style="left:1197px;top:195px">项目文件</div>
<div class="t12" style="left:1265.5px;top:195px">[项目执行情况]</div>
<div class="t12" style="left:1365.5px;top:195px">[项目输出数据]</div>
<div class="t12" style="left:1465.5px;top:195px">[未完成的计划输出]</div>
<div class="t12" style="left:1589.5px;top:195px">[项目执行情况统计]</div>
<div class="t12" style="left:1713.5px;top:195px">[任务完成情况统计]</div>
<div class="t12" style="left:1837.5px;top:195px">[绩效统计(按项目成员)]</div>
<!-- form -->
<div class="lbl" style="left:949px;top:226px">项目编号</div><div class="fld" style="left:1089px;top:219px;width:533px">0112-2</div>
<div class="lbl" style="left:949px;top:255px">预期开始时间</div><div class="fld" style="left:1089px;top:248px;width:533px">2019-09-19 08:00</div>
<div class="lbl" style="left:949px;top:284px">项目经理</div><div class="fld" style="left:1089px;top:277px;width:533px">A01958<span class="c">张拯</span></div>
<div class="lbl" style="left:949px;top:313px">实际开始时间</div><div class="fld" style="left:1089px;top:306px;width:533px">2021-12-27 16:38</div>
<div class="lbl" style="left:949px;top:342px">执行状态</div><div class="fld" style="left:1089px;top:335px;width:533px"><span class="c">执行中</span></div>
<div class="lbl" style="left:949px;top:371px">项目归属</div><div class="fld" style="left:1089px;top:364px;width:533px"></div>
<div class="lbl" style="left:949px;top:400px">项目类型</div><div class="fld" style="left:1089px;top:393px;width:533px"><span class="c">全新产品开发</span></div>
<div class="lbl" style="left:949px;top:429px">是否模板</div><div class="fld" style="left:1089px;top:422px;width:533px"><span class="c">否</span></div>
<div class="lbl" style="left:949px;top:458px">当前阶段预期完成时间</div><div class="fld" style="left:1089px;top:451px;width:533px">2022-03-09 17:00</div>
<div class="lbl" style="left:949px;top:487px">计划总工时</div><div class="fld" style="left:1089px;top:480px;width:533px">1760</div>
<div class="lbl" style="left:949px;top:516px">完成计划工时</div><div class="fld" style="left:1089px;top:509px;width:533px">688</div>
<div class="lbl" style="left:949px;top:545px">计划总工期</div><div class="fld" style="left:1089px;top:538px;width:533px"><span style="margin-left:-2px">645.0</span></div>
<div class="lbl" style="left:949px;top:574px">项目排定方式</div><div class="fld" style="left:1089px;top:567px;width:533px"><span class="c">从项目开始之日起</span></div>
<div class="lbl" style="left:949px;top:603px">项目模式</div><div class="fld" style="left:1089px;top:596px;width:533px"><span class="c">手动模式</span></div>
<div class="lbl" style="left:949px;top:632px">创建时间</div><div class="fld" style="left:1089px;top:625px;width:533px">2021-12-27 16:20</div>
<div class="lbl" style="left:949px;top:661px">创建者</div><div class="fld" style="left:1089px;top:654px;width:533px">B00047<span class="c">唐浩</span></div>
<div class="lbl" style="left:1632px;top:226px">项目名称</div><div class="fld" style="left:1772px;top:219px;width:300px"><span style="letter-spacing:-0.7px">MIFA</span></div>
<div class="lbl" style="left:1632px;top:255px">已排定完成时间</div><div class="fld" style="left:1772px;top:248px;width:300px">2022-03-09 17:00</div>
<div class="lbl" style="left:1632px;top:284px">负责部门</div><div class="fld" style="left:1772px;top:277px;width:300px"><span class="c">项目部</span></div>
<div class="lbl" style="left:1632px;top:313px">实际完成时间</div><div class="fld" style="left:1772px;top:306px;width:300px"></div>
<div class="lbl" style="left:1632px;top:342px">客户代码</div><div class="fld" style="left:1772px;top:335px;width:300px"><span style="letter-spacing:-0.7px">MIFA</span></div>
<div class="lbl" style="left:1632px;top:371px">项目级别</div><div class="fld" style="left:1772px;top:364px;width:300px"><span class="c">重要</span>(Maj)</div>
<div class="lbl" style="left:1632px;top:400px">英文名称</div><div class="fld" style="left:1772px;top:393px;width:300px"></div>
<div class="lbl" style="left:1632px;top:429px">当前阶段名称</div><div class="fld" style="left:1772px;top:422px;width:300px"><span class="c">批量</span></div>
<div class="lbl" style="left:1632px;top:458px">首次估计总工时</div><div class="fld" style="left:1772px;top:451px;width:300px">1760</div>
<div class="lbl" style="left:1632px;top:487px">实际总工时</div><div class="fld" style="left:1772px;top:480px;width:300px">290</div>
<div class="lbl" style="left:1632px;top:516px">首次估计总工期</div><div class="fld" style="left:1772px;top:509px;width:300px"><span style="margin-left:-2px">645.0</span></div>
<div class="lbl" style="left:1632px;top:545px">实际总工期</div><div class="fld" style="left:1772px;top:538px;width:300px"></div>
<div class="lbl" style="left:1632px;top:574px">预期完成时间</div><div class="fld" style="left:1772px;top:567px;width:300px">2022-10-01 17:00</div>
<div class="lbl" style="left:1632px;top:603px">备注</div><div class="fld" style="left:1772px;top:596px;width:300px"></div>
<div class="lbl" style="left:1632px;top:632px">修改时间</div><div class="fld" style="left:1772px;top:625px;width:300px">2021-12-27 16:24</div>
<div class="lbl" style="left:1632px;top:661px">修改者</div><div class="fld" style="left:1772px;top:654px;width:300px">B00047<span class="c">唐浩</span></div>
</div>
</body></html>
